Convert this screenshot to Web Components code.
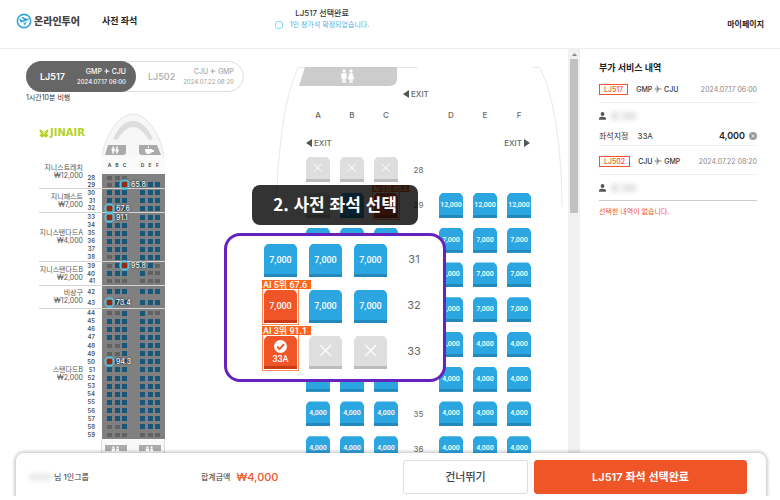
<!DOCTYPE html>
<html lang="ko">
<head>
<meta charset="utf-8">
<meta name="viewport" content="width=device-width, initial-scale=1">
<title>사전 좌석</title>
<style>
html, body {
    height: 100%;
    margin: 0;
}

body {
    display: flex;
    flex-direction: column;
    overflow: hidden;
    background: #fff;
    color: #333;
    font-family: Inter, "Noto Sans CJK KR", sans-serif;
    font-size: 8px;
    line-height: 12px;
}

main {
    display: flex;
    flex: 1;
    min-height: 0;
}
</style>
</head>
<body>
<site-header></site-header>
<main>
    <cabin-overview></cabin-overview>
    <seat-map>
        <step-callout slot="overlay">2. 사전 좌석 선택</step-callout>
        <seat-zoom slot="overlay"></seat-zoom>
    </seat-map>
    <scroll-rail></scroll-rail>
    <service-summary></service-summary>
</main>
<booking-bar></booking-bar>

<script>
const attach = (host, html) => {
    const template = document.createElement('template');
    template.innerHTML = html;
    host.attachShadow({ mode: 'open' }).appendChild(template.content);
};

const lavatory = `
<g fill="#fff">
    <circle cx="4" cy="2" r="1.7"/>
    <path d="M1.2 4.2h5.6v5H5.7V14H4.3v-4h-.6v4H2.3V9.200H1.2z"/>
    <circle cx="11" cy="2" r="1.7"/>
    <path d="M9.500 4.200h3l1.800 6h-1.800V14h-1.200v-3.500h-.6V14H9.500v-3.800H7.700z"/>
</g>`;

const plane = `
<svg viewBox="0 0 16 16" width="8" height="8"><path d="M1 5l2 2h3L4.500 1H6l4 6h4q1.500 0 1.500 1T14 9h-4l-4 6H4.500L6 9H3l-2 2 1-3z" fill="currentColor"/></svg>`;

class SiteHeader extends HTMLElement {
    constructor() {
        super();
        attach(this, `
<style>
:host {
    display: block;
    border-bottom: 1px solid #eee;
}
header {
    display: grid;
    grid-template-columns: 1fr auto 1fr;
    align-items: center;
    height: 48px;
    padding: 0 16px;
    box-sizing: border-box;
}
a {
    color: inherit;
    text-decoration: none;
}
.start {
    display: flex;
    align-items: center;
    gap: 22px;
    padding-bottom: 6px;
}
.brand {
    display: flex;
    align-items: center;
    gap: 2px;
    font-size: 10px;
    font-weight: 900;
    color: #444;
}
h1 {
    margin: 0;
    font-size: 9px;
    font-weight: 700;
    color: #222;
}
.status {
    display: grid;
    padding-bottom: 10px;
    text-align: center;
    margin-right: 136px;
}
.status strong {
    font-weight: 500;
}
.status span {
    display: flex;
    align-items: center;
    gap: 7px;
    font-size: 7px;
    color: #55aee6;
}
.status i {
    width: 6px;
    height: 6px;
    border: 1px solid #7fdcf5;
    border-radius: 3px;
}
.my {
    justify-self: end;
    font-weight: 700;
    color: #222;
}
</style>
<header>
    <div class="start">
        <a class="brand" href="#">
            <svg viewBox="0 0 30 30" width="16" height="16">
                <circle cx="15" cy="15" r="12.500" fill="#fff" stroke="#35a3d8" stroke-width="3"/>
                <path d="M6 12l2-1 4 3 3-1-5-5 2-1 8 4q4-1.500 4.500 0t-3.500 3l-10 4q-3 0-5-6z" fill="#35a3d8"/>
                <path d="M14 19l7-3-4 6-2 1z" fill="#35a3d8"/>
            </svg>온라인투어</a>
        <h1>사전 좌석</h1>
    </div>
    <div class="status">
        <strong>LJ517 선택완료</strong>
        <span><i></i>1인 창가석 확정되었습니다.</span>
    </div>
    <a class="my" href="#">마이페이지</a>
</header>`);
    }
}

class FlightTabs extends HTMLElement {
    constructor() {
        super();
        attach(this, `
<style>
:host {
    display: flex;
    flex: none;
    box-sizing: border-box;
    width: 218px;
    height: 31px;
    border: 1px solid #ddd;
    border-radius: 16px;
}
button {
    display: flex;
    flex: 1;
    align-items: center;
    justify-content: space-between;
    margin: -1px;
    padding: 0 10px 0 14px;
    border: 0;
    border-radius: 16px;
    background: none;
    color: #aaa;
    font: inherit;
    font-size: 7px;
    font-weight: 500;
    line-height: 10px;
    text-align: right;
}
button[aria-selected=true] {
    background: #666;
    color: #fff;
}
b {
    font-size: 9px;
    font-weight: 600;
}
.off b {
    font-weight: 500;
}
svg {
    width: 6px;
    height: 6px;
}
.date {
    display: block;
    font-size: 6px;
}
</style>
<button role="tab" aria-selected="true"><b>LJ517</b><span>GMP ${plane} CJU<span class="date">2024.07.17 06:00</span></span></button>
<button role="tab" aria-selected="false" class="off"><b>LJ502</b><span>CJU ${plane} GMP<span class="date">2024.07.22 08:20</span></span></button>`);
    }
}

// o = open, x = closed, p = recommended, . = no seat
const zones = [
    { name: '지니스트레치', fee: '₩12,000', height: 33, first: 28, rows: ['xxx...', 'xop65.8ooo'] },
    { name: '지니패스트', fee: '₩7,000', height: 24, first: 30, rows: ['oooooo', 'oooooo', 'p67.6ooooo'] },
    { name: '지니스탠다드A', fee: '₩4,000', height: 49, first: 33, rows: ['p91.1xxooo', 'oooooo', 'oooooo', 'oooooo', 'oooooo', 'xooooo'] },
    { name: '지니스탠다드B', fee: '₩2,000', height: 24, first: 39, rows: ['xop95.8oox', 'ooooxx', 'xxxxxx'] },
    { name: '비상구', fee: '₩12,000', height: 23, first: 42, rows: ['oooooo', 'p73.4ooooo'] },
    { name: '스탠다드B', fee: '₩2,000', height: 130, first: 44, rows: ['xxooxx', 'oooooo', 'oooooo', 'oooooo', 'xxoooo', 'xxoooo', 'p94.3ooooo',
        'oooooo', 'oooooo', 'oooooo', 'oooooo', 'oooooo', 'oooooo', 'oooooo', 'xxoooo', 'xxxxxx'] }
];

class CabinOverview extends HTMLElement {
    constructor() {
        super();
        const ring = '<svg viewBox="0 0 11 11" width="11" height="11"><circle cx="5.500" cy="5.500" r="4.500" fill="none" stroke="#4cc8ee" stroke-width="1.400"/></svg>';
        const seat = code => code[0] === 'p' ? `<i class="p">${ring}<b>${code.slice(1)}</b></i>` : `<i class="${code}"></i>`;
        const row = (number, codes) => {
            const seats = codes.match(/p[\d.]{4}|[ox.]/g).map(seat);
            return `<div class="row"><span class="no">${number}</span><div class="cabin"><div>${seats.slice(0, 3).join('')}</div><div>${seats.slice(3).join('')}</div></div></div>`;
        };
        const zone = (z, index) => `
<section style="height:${z.height}px">
    <p>${z.name}<br>${z.fee}</p>
    <div class="side">
        ${index ? '' : '<div class="letters"><div><span>A</span><span>B</span><span>C</span></div><div><span>D</span><span>E</span><span>F</span></div></div>'}
        <div class="rows">${z.rows.map((r, n) => row(z.first + n, r)).join('')}</div>
    </div>
</section>`;
        attach(this, `
<style>
:host {
    display: flex;
    flex: 0 0 275px;
    flex-direction: column;
    box-sizing: border-box;
    padding: 12px 0 0 26px;
    overflow: hidden;
}
.time {
    flex: none;
    font-size: 7px;
}
.nose {
    display: flex;
    flex: none;
    justify-content: space-between;
    width: 126px;
    margin: 9px 0 0 13px;
}
.brand {
    display: flex;
    align-items: center;
    align-self: flex-start;
    gap: 1px;
    margin-top: 14px;
    color: #b4d222;
    font-family: "DejaVu Sans", sans-serif;
    font-size: 10px;
    font-weight: 700;
}
section {
    display: flex;
    flex: none;
    box-sizing: border-box;
    width: 126px;
    margin-left: 13px;
    border-bottom: 1px solid #d4d4d4;
}
section:last-of-type {
    border: 0;
}
p {
    flex: 0 0 44px;
    align-self: center;
    margin: 0;
    font-size: 7px;
    line-height: 8px;
    text-align: right;
    white-space: nowrap;
    color: #555;
}
.side {
    display: flex;
    flex: 1;
    flex-direction: column;
}
.rows {
    display: grid;
    flex: 1;
    grid-auto-rows: 1fr;
    min-height: 0;
}
.row {
    display: flex;
    gap: 7px;
    min-height: 0;
}
.no {
    align-self: center;
    width: 12px;
    font-size: 6px;
    font-weight: 600;
    line-height: 8px;
    text-align: right;
    color: #555;
}
.cabin, .letters {
    display: flex;
    align-items: center;
    justify-content: space-between;
    box-sizing: border-box;
    width: 63px;
    padding: 0 5px;
    background: #808080;
}
.letters {
    height: 18px;
    margin-left: 19px;
    background: #fafafa;
    color: #444;
    font-size: 5px;
    font-weight: 600;
}
.cabin div, .letters div {
    display: flex;
    align-items: center;
    justify-content: space-between;
    width: 20px;
}
.letters span {
    width: 5px;
    text-align: center;
}
i {
    width: 5px;
    height: 5px;
    background: #17587a;
    font-style: normal;
}
.x {
    height: 4px;
    background: #626262;
}
i[class="."] {
    visibility: hidden;
}
.p {
    position: relative;
    z-index: 1;
    background: #8e2c16;
}
.p svg {
    position: absolute;
    left: -3px;
    top: -3px;
}
.p b {
    position: absolute;
    left: 9px;
    top: -1px;
    color: #fff;
    font-size: 7px;
    font-weight: 500;
    line-height: 8px;
    text-shadow: 0 0 1px #222, 0 0 2px #222;
}
.tail {
    flex: none;
    margin-left: 75px;
}
</style>
<flight-tabs role="tablist"></flight-tabs>
<div class="time">1시간10분 비행</div>
<div class="nose">
    <div class="brand">
        <svg viewBox="0 0 20 18" width="10" height="9"><path d="M10 8L8 4 1 0l1 7 3 2-4 3 3 4 4 1 2-4 2 4 4-1 3-4-4-3 3-2 1-7-7 4z" fill="#b4d222"/><path d="M5 5l5 5 5-5" fill="none" stroke="#fff"/></svg>
        JINAIR
    </div>
    <svg viewBox="0 0 64 43" width="64" height="43">
        <path d="M1 43Q3 27 14 12 23 1 32 1t18 11Q61 27 63 43" fill="#f7f7f7" stroke="#e4e4e4"/>
        <path d="M12 26Q20 8 32 8t20 18l-4 1Q40 14 32 14t-16 13z" fill="#ddd"/>
        <path d="M7 32h18v7q0 3-3 3H4zM38 32h18l4 10H41q-3 0-3-3z" fill="#aaa"/>
        <g transform="translate(10 33) scale(.55)">${lavatory}</g>
        <path d="M44 36h7v1h2v2h-2q-1 2-4 2t-3-5zM47 33h1v2h-1z" fill="#fff"/>
    </svg>
</div>
${zones.map(zone).join('')}
<svg class="tail" viewBox="0 0 64 15" width="64" height="15">
    <path d="M.5 0v15M63.500 0v15" stroke="#ddd"/>
    <path d="M1 0h62v15H1z" fill="#f8f8f8"/>
    <path d="M4 6h22v6H4zM38 6h22v6H38z" fill="#aaa"/>
    <g transform="translate(10 7) scale(.6)">${lavatory}</g>
    <g transform="translate(44 7) scale(.6)">${lavatory}</g>
</svg>`);
    }
}

class SeatBox extends HTMLElement {
    connectedCallback() {
        const state = this.getAttribute('state') || 'open';
        const tag = this.getAttribute('tag');
        const cross = '<svg viewBox="0 0 10 10"><path d="M1 1l8 8M9 1L1 9" stroke="#fff"/></svg>';
        const check = '<svg class="check" viewBox="0 0 14 14"><circle cx="7" cy="7" r="7" fill="#fff"/><path d="M3.500 7l2.500 2.700L10.800 4.500" fill="none" stroke="#f05528" stroke-width="2"/></svg>';
        attach(this, `
<style>
:host {
    display: block;
    position: relative;
    width: var(--seat-width, 24px);
    height: var(--seat-height, 25px);
    font-family: Roboto, "Noto Sans CJK KR", sans-serif;
}
button {
    display: flex;
    flex-direction: column;
    align-items: center;
    justify-content: center;
    box-sizing: border-box;
    width: 100%;
    height: 100%;
    padding: 2px 0 0;
    border: 0;
    border-bottom: 3px solid #2389bd;
    background: #2ca6e0;
    color: #fff;
    clip-path: polygon(0 4px, 1px 2px, 3px 0, calc(100% - 3px) 0, calc(100% - 1px) 2px, 100% 4px, 100% 100%, 0 100%);
    font: inherit;
    font-size: var(--seat-font, 7px);
    font-weight: 500;
    line-height: 12px;
}
.closed {
    padding: 0;
    border-color: #bcbcbc;
    background: #dedede;
}
.pick {
    border-color: #c93b17;
    background: #f05528;
}
svg {
    width: 40%;
}
.check {
    width: 13px;
    height: 13px;
}
.frame {
    position: absolute;
    inset: -2px;
    border: 1px solid #ff8a55;
    pointer-events: none;
}
.tag {
    position: absolute;
    left: -2px;
    bottom: calc(100% + 1px);
    padding-left: 1px;
    width: var(--tag-width, 36px);
    height: var(--tag-height, 7px);
    background: #ff661c;
    color: #fff;
    font-size: var(--seat-font, 7px);
    font-weight: 500;
    line-height: calc(var(--tag-height, 7px) + 2px);
    white-space: nowrap;
}
</style>
<button class="${state}" ${state === 'closed' ? 'disabled aria-label="선택 불가"' : ''}>${state === 'closed' ? cross : this.hasAttribute('checked') ? check + '<slot></slot>' : '<slot></slot>'}</button>
${tag ? `<div class="frame"></div><div class="tag">${tag}</div>` : ''}`);
    }
}

class SeatMap extends HTMLElement {
    constructor() {
        super();
        const open = price => `<seat-box>${price}</seat-box>`;
        const closed = '<seat-box state="closed"></seat-box>';
        const row = (number, left, right) => `<div class="row"><div class="trio">${left}</div><span>${number}</span><div class="trio">${right}</div></div>`;
        const plain = (number, price) => row(number, open(price).repeat(3), open(price).repeat(3));
        // left half lies under the zoom panel
        const covered = price => row('', open('').repeat(3), open(price).repeat(3));
        attach(this, `
<style>
:host {
    display: block;
    flex: 1;
    position: relative;
    min-width: 0;
}
.body {
    position: relative;
    height: 100%;
    box-sizing: border-box;
    padding: 18px 0 0 31px;
    overflow: hidden;
}
.hull {
    position: absolute;
    left: 0;
    top: 18px;
}
.galley {
    position: relative;
    display: block;
    margin-left: -7px;
}
.row {
    display: flex;
    align-items: center;
    color: #666;
}
.row > span {
    width: 41px;
    text-align: center;
}
.trio {
    display: flex;
    gap: 10px;
}
.trio > b {
    width: 24px;
    font-weight: 500;
    text-align: center;
}
.exit {
    display: flex;
    align-items: center;
    gap: 2px;
    color: #666;
    font-weight: 500;
}
.exit svg {
    width: 6px;
    height: 8px;
}
.mid {
    margin: 2px 0 0 97px;
}
.letters {
    margin-top: 9px;
}
.sides {
    display: flex;
    justify-content: space-between;
    width: 224px;
    margin: 16px 0 8px;
}
.rows {
    display: grid;
    grid-auto-rows: 1fr;
    height: 278px;
    margin-top: 6px;
}
</style>
<div class="body">
    <svg class="hull" viewBox="0 0 288 390" width="288" height="390" fill="none" stroke="#e8e8e8">
        <path d="M143 .5H23Q12 25 7 63 2 100 1 140M257 .5h8Q279 30 284 80q3 28 3 60"/>
    </svg>
    <svg class="galley" viewBox="0 0 98 19" width="98" height="19">
        <path d="M6 0h92v11q0 8-8 8H0z" fill="#ccc"/>
        <g transform="translate(41 2)">${lavatory}</g>
    </svg>
    <div class="exit mid"><svg viewBox="0 0 6 8"><path d="M6 0v8L0 4z" fill="#555"/></svg>EXIT</div>
    <div class="row letters"><div class="trio"><b>A</b><b>B</b><b>C</b></div><span></span><div class="trio"><b>D</b><b>E</b><b>F</b></div></div>
    <div class="sides">
        <div class="exit"><svg viewBox="0 0 6 8"><path d="M6 0v8L0 4z" fill="#555"/></svg>EXIT</div>
        <div class="exit">EXIT<svg viewBox="0 0 6 8"><path d="M0 0v8l6-4z" fill="#555"/></svg></div>
    </div>
    ${row(28, closed.repeat(3), '')}
    <div class="rows">
        ${row(29, closed + open('') + '<seat-box state="pick" tag="AI 6위 65.0"></seat-box>', open('12,000').repeat(3))}
        ${covered('7,000').repeat(3)}
        ${covered('4,000').repeat(2)}
        ${plain(35, '4,000')}${plain(36, '4,000')}
    </div>
</div>
<slot name="overlay"></slot>`);
    }
}

class StepCallout extends HTMLElement {
    constructor() {
        super();
        attach(this, `
<style>
:host {
    position: absolute;
    left: -23px;
    top: 136px;
    box-sizing: border-box;
    width: 166px;
    border-radius: 8px;
    background: rgba(0, 0, 0, .8);
    color: #fff;
    font-family: "Noto Sans CJK KR", sans-serif;
    font-size: 17px;
    font-weight: 700;
    line-height: 38px;
    padding-bottom: 2px;
    text-align: center;
    white-space: nowrap;
}
</style>
<slot></slot>`);
    }
}

class SeatZoom extends HTMLElement {
    constructor() {
        super();
        attach(this, `
<style>
:host {
    position: absolute;
    left: -51px;
    top: 184px;
    display: grid;
    gap: 13px;
    box-sizing: border-box;
    width: 222px;
    padding: 8px 18px 10px 37px;
    border: 3px solid #6522bd;
    border-radius: 16px;
    background: #fff;
    --seat-width: 33px;
    --seat-height: 33px;
    --seat-font: 9px;
    --tag-width: 48px;
    --tag-height: 9px;
}
div {
    display: flex;
    align-items: center;
    gap: 12px;
}
span {
    flex: 1;
    padding: 0 0 3px 4px;
    color: #666;
    font-size: 11px;
    text-align: center;
}
</style>
<div><seat-box>7,000</seat-box><seat-box>7,000</seat-box><seat-box>7,000</seat-box><span>31</span></div>
<div><seat-box state="pick" tag="AI 5위 67.6">7,000</seat-box><seat-box>7,000</seat-box><seat-box>7,000</seat-box><span>32</span></div>
<div><seat-box state="pick" checked tag="AI 3위 91.1">33A</seat-box><seat-box state="closed"></seat-box><seat-box state="closed"></seat-box><span>33</span></div>`);
    }
}

class ScrollRail extends HTMLElement {
    constructor() {
        super();
        attach(this, `
<style>
:host {
    display: flex;
    flex: 0 0 12px;
    flex-direction: column;
    align-items: center;
    background: #f1f1f1;
}
svg {
    margin: 4px 0 3px;
}
div {
    width: 8px;
    height: 154px;
    background: #c1c1c1;
}
</style>
<svg viewBox="0 0 5 3" width="5" height="3"><path d="M0 3h5L2.500 0z" fill="#8a8a8a"/></svg>
<div></div>`);
    }
}

class ServiceSummary extends HTMLElement {
    constructor() {
        super();
        const flight = (code, from, to, date) => `<div class="flight"><b>${code}</b><span>${from} ${plane} ${to}</span><time>${date}</time></div>`;
        const person = '<div class="person"><svg viewBox="0 0 14 16" width="7" height="8" fill="#555"><circle cx="7" cy="4" r="3.800"/><path d="M0 15.500V13q0-3.500 7-3.500t7 3.500v2.500z"/></svg><i></i><i></i></div>';
        attach(this, `
<style>
:host {
    display: block;
    flex: 0 0 200px;
    box-sizing: border-box;
    padding: 13px 23px 0 19px;
}
h2 {
    margin: 0;
    font-size: 9px;
    font-weight: 700;
    color: #222;
}
.flight {
    display: flex;
    align-items: center;
    gap: 8px;
    box-sizing: border-box;
    height: 29px;
    padding-top: 3px;
    border-bottom: 1px solid #eee;
    font-size: 7px;
    font-weight: 500;
}
.flight b {
    padding: 0 4px;
    border: 1px solid #f05528;
    color: #f05528;
    font-weight: 500;
    line-height: 9px;
}
.flight svg {
    vertical-align: -1px;
    color: #888;
}
time {
    margin-left: auto;
    color: #888;
    font-weight: 400;
}
.person {
    display: flex;
    align-items: center;
    gap: 5px;
    height: 25px;
    padding-top: 1px;
    box-sizing: border-box;
}
.person i {
    width: 8px;
    height: 8px;
    background: #e4e4e4;
    filter: blur(2px);
}
.person i + i {
    width: 14px;
    margin-left: -2px;
}
.seat {
    display: flex;
    align-items: center;
    gap: 9px;
    box-sizing: border-box;
    height: 18px;
    padding-bottom: 1px;
    border-bottom: 1px solid #eee;
}
.seat strong {
    margin-left: auto;
    font-size: 9px;
    font-weight: 600;
    color: #222;
}
.seat button {
    display: flex;
    margin-left: -5px;
    padding: 0;
    border: 0;
    background: none;
}
.none {
    margin: 0;
    padding-top: 5px;
    border-top: 1px solid #ccc;
    font-size: 7px;
    color: #f05528;
}
</style>
<h2>부가 서비스 내역</h2>
${flight('LJ517', 'GMP', 'CJU', '2024.07.17 06:00')}
${person}
<div class="seat"><span>좌석지정</span><span>33A</span><strong>4,000</strong>
    <button aria-label="삭제"><svg viewBox="0 0 16 16" width="8" height="8"><circle cx="8" cy="8" r="8" fill="#999"/><path d="M5 5l6 6M11 5l-6 6" stroke="#fff" stroke-width="1.500"/></svg></button></div>
${flight('LJ502', 'CJU', 'GMP', '2024.07.22 08:20')}
${person}
<p class="none">선택한 내역이 없습니다.</p>`);
    }
}

class BookingBar extends HTMLElement {
    constructor() {
        super();
        attach(this, `
<style>
:host {
    position: relative;
    display: flex;
    align-items: center;
    box-sizing: border-box;
    height: 43px;
    margin: 0 14px 4px 16px;
    padding: 5px 19px 0 13px;
    border-radius: 8px 8px 0 0;
    background: #fff;
    box-shadow: 0 0 3px 2px rgba(0, 0, 0, .18);
    clip-path: inset(-6px -6px 0);
}
.name {
    width: 22px;
    height: 8px;
    margin-right: 3px;
    background: #ececec;
    filter: blur(2px);
}
.group {
    width: 147px;
}
.total {
    display: flex;
    align-items: center;
    flex: 1;
    gap: 6px;
}
strong {
    font-size: 11px;
    font-weight: 500;
    color: #f05528;
}
button {
    width: 125px;
    height: 34px;
    margin-left: 6px;
    padding: 0;
    border: 1px solid #ddd;
    border-radius: 3px;
    background: #fff;
    color: #444;
    font: inherit;
    font-size: 11px;
    font-weight: 500;
}
.done {
    width: 213px;
    border-color: #f05528;
    background: #f05528;
    color: #fff;
    font-weight: 600;
}
</style>
<span class="name"></span>
<span class="group">님 1인그룹</span>
<span class="total">합계금액 <strong>₩4,000</strong></span>
<button>건너뛰기</button>
<button class="done">LJ517 좌석 선택완료</button>`);
    }
}

customElements.define('site-header', SiteHeader);
customElements.define('flight-tabs', FlightTabs);
customElements.define('cabin-overview', CabinOverview);
customElements.define('seat-box', SeatBox);
customElements.define('seat-map', SeatMap);
customElements.define('step-callout', StepCallout);
customElements.define('seat-zoom', SeatZoom);
customElements.define('scroll-rail', ScrollRail);
customElements.define('service-summary', ServiceSummary);
customElements.define('booking-bar', BookingBar);
</script>
</body>
</html>
